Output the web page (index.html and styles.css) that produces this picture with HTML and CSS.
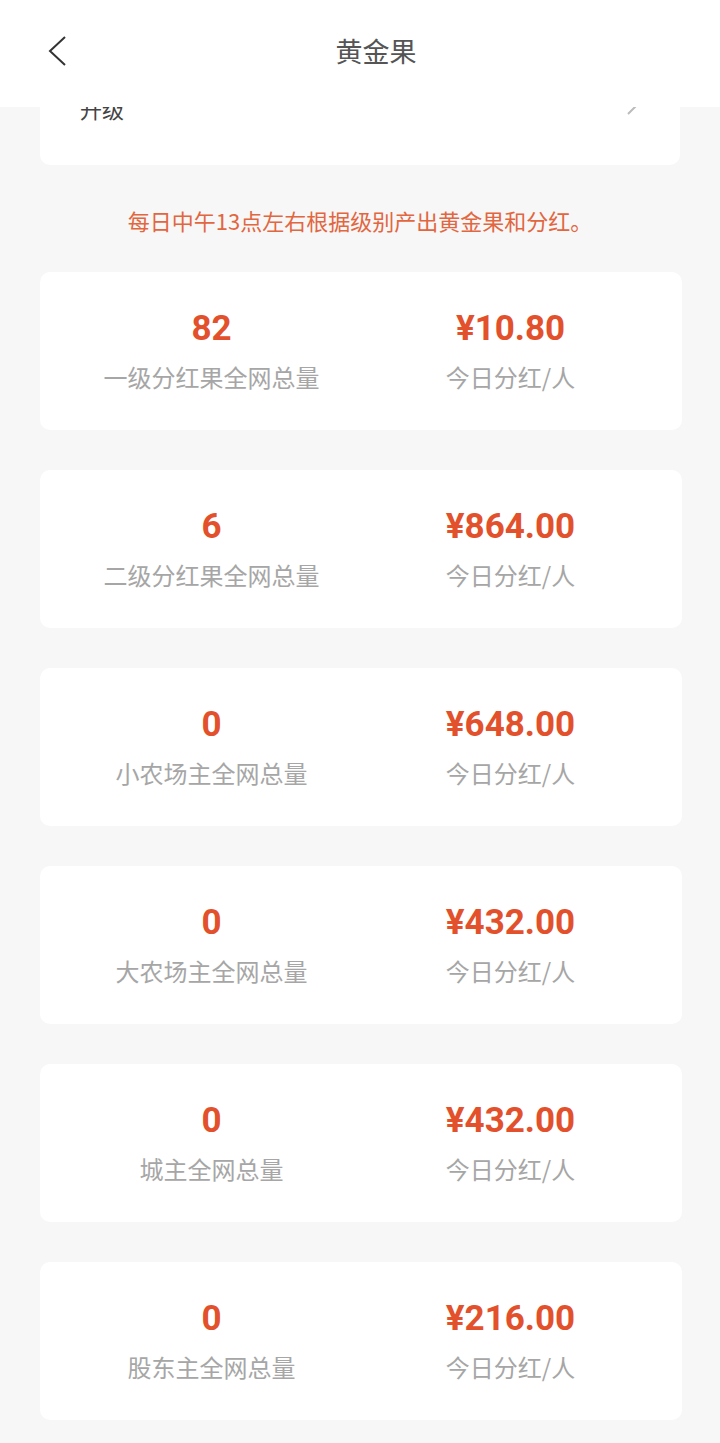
FILE: index.html
```html
<!DOCTYPE html>
<html lang="zh-CN">
<head>
    <meta charset="UTF-8">
    <meta name="viewport" content="width=device-width, initial-scale=1.0">
    <title>黄金果</title>
    <link rel="stylesheet" href="styles.css">
</head>
<body>
    <header class="top-bar">
        <a class="back" href="#">
            <svg width="22" height="30" viewBox="0 0 22 30"><path d="M19 1 L4 15 L19 29" fill="none" stroke="#333" stroke-width="2"/></svg>
        </a>
        <h1>黄金果</h1>
    </header>

    <div class="page">
        <div class="upgrade">
            <span>升级</span>
            <svg width="12" height="20" viewBox="0 0 12 20"><path d="M2 2 L10 10 L2 18" fill="none" stroke="#bbb" stroke-width="2"/></svg>
        </div>

        <p class="notice">每日中午13点左右根据级别产出黄金果和分红。</p>

        <div class="card">
            <div class="col"><strong>82</strong><span>一级分红果全网总量</span></div>
            <div class="col"><strong>¥10.80</strong><span>今日分红/人</span></div>
        </div>
        <div class="card">
            <div class="col"><strong>6</strong><span>二级分红果全网总量</span></div>
            <div class="col"><strong>¥864.00</strong><span>今日分红/人</span></div>
        </div>
        <div class="card">
            <div class="col"><strong>0</strong><span>小农场主全网总量</span></div>
            <div class="col"><strong>¥648.00</strong><span>今日分红/人</span></div>
        </div>
        <div class="card">
            <div class="col"><strong>0</strong><span>大农场主全网总量</span></div>
            <div class="col"><strong>¥432.00</strong><span>今日分红/人</span></div>
        </div>
        <div class="card">
            <div class="col"><strong>0</strong><span>城主全网总量</span></div>
            <div class="col"><strong>¥432.00</strong><span>今日分红/人</span></div>
        </div>
        <div class="card">
            <div class="col"><strong>0</strong><span>股东主全网总量</span></div>
            <div class="col"><strong>¥216.00</strong><span>今日分红/人</span></div>
        </div>
    </div>
</body>
</html>
```

FILE: styles.css
```css
body {
    margin: 0;
    padding: 0;
    background-color: #f7f7f7;
    font-family: Roboto, "Noto Sans CJK SC", sans-serif;
}
.top-bar {
    position: fixed;
    top: 0;
    left: 0;
    right: 0;
    height: 107px;
    background: #fff;
    z-index: 10;
    display: flex;
    align-items: flex-start;
    justify-content: center;
}
.top-bar h1 {
    margin: 0;
    padding-top: 32px;
    font-size: 27px;
    line-height: 38px;
    font-weight: normal;
    color: #555;
    font-family: "Noto Sans CJK SC", sans-serif;
    margin-left: 32px;
}
.back {
    position: absolute;
    left: 46px;
    top: 36px;
}
.page {
    padding-top: 60px;
    padding-bottom: 20px;
}
.upgrade {
    margin: 0 40px;
    height: 105px;
    background: #fff;
    border-radius: 10px;
    display: flex;
    align-items: flex-end;
    justify-content: space-between;
    padding: 0 42px 0 40px;
    box-sizing: border-box;
}
.upgrade span {
    font-family: "Noto Sans CJK SC", sans-serif;
    font-size: 22px;
    line-height: 32px;
    color: #444;
    margin-bottom: 41px;
}
.upgrade svg {
    margin-bottom: 49px;
}
.notice {
    margin: 40px 0 37px;
    text-align: center;
    font-family: "Noto Sans CJK SC", sans-serif;
    font-size: 22px;
    line-height: 30px;
    color: #e2663f;
}
.card {
    margin: 0 38px 40px 40px;
    background: #fff;
    border-radius: 10px;
    padding: 34px 22px 36px;
    display: flex;
}
.col {
    flex: 1;
    display: flex;
    flex-direction: column;
    align-items: center;
}
.col strong {
    font-size: 35px;
    line-height: 46px;
    font-weight: bold;
    color: #e2512c;
}
.col span {
    margin-top: 8px;
    font-family: "Noto Sans CJK SC", sans-serif;
    font-size: 24px;
    line-height: 34px;
    color: #a6a6a6;
}
```
